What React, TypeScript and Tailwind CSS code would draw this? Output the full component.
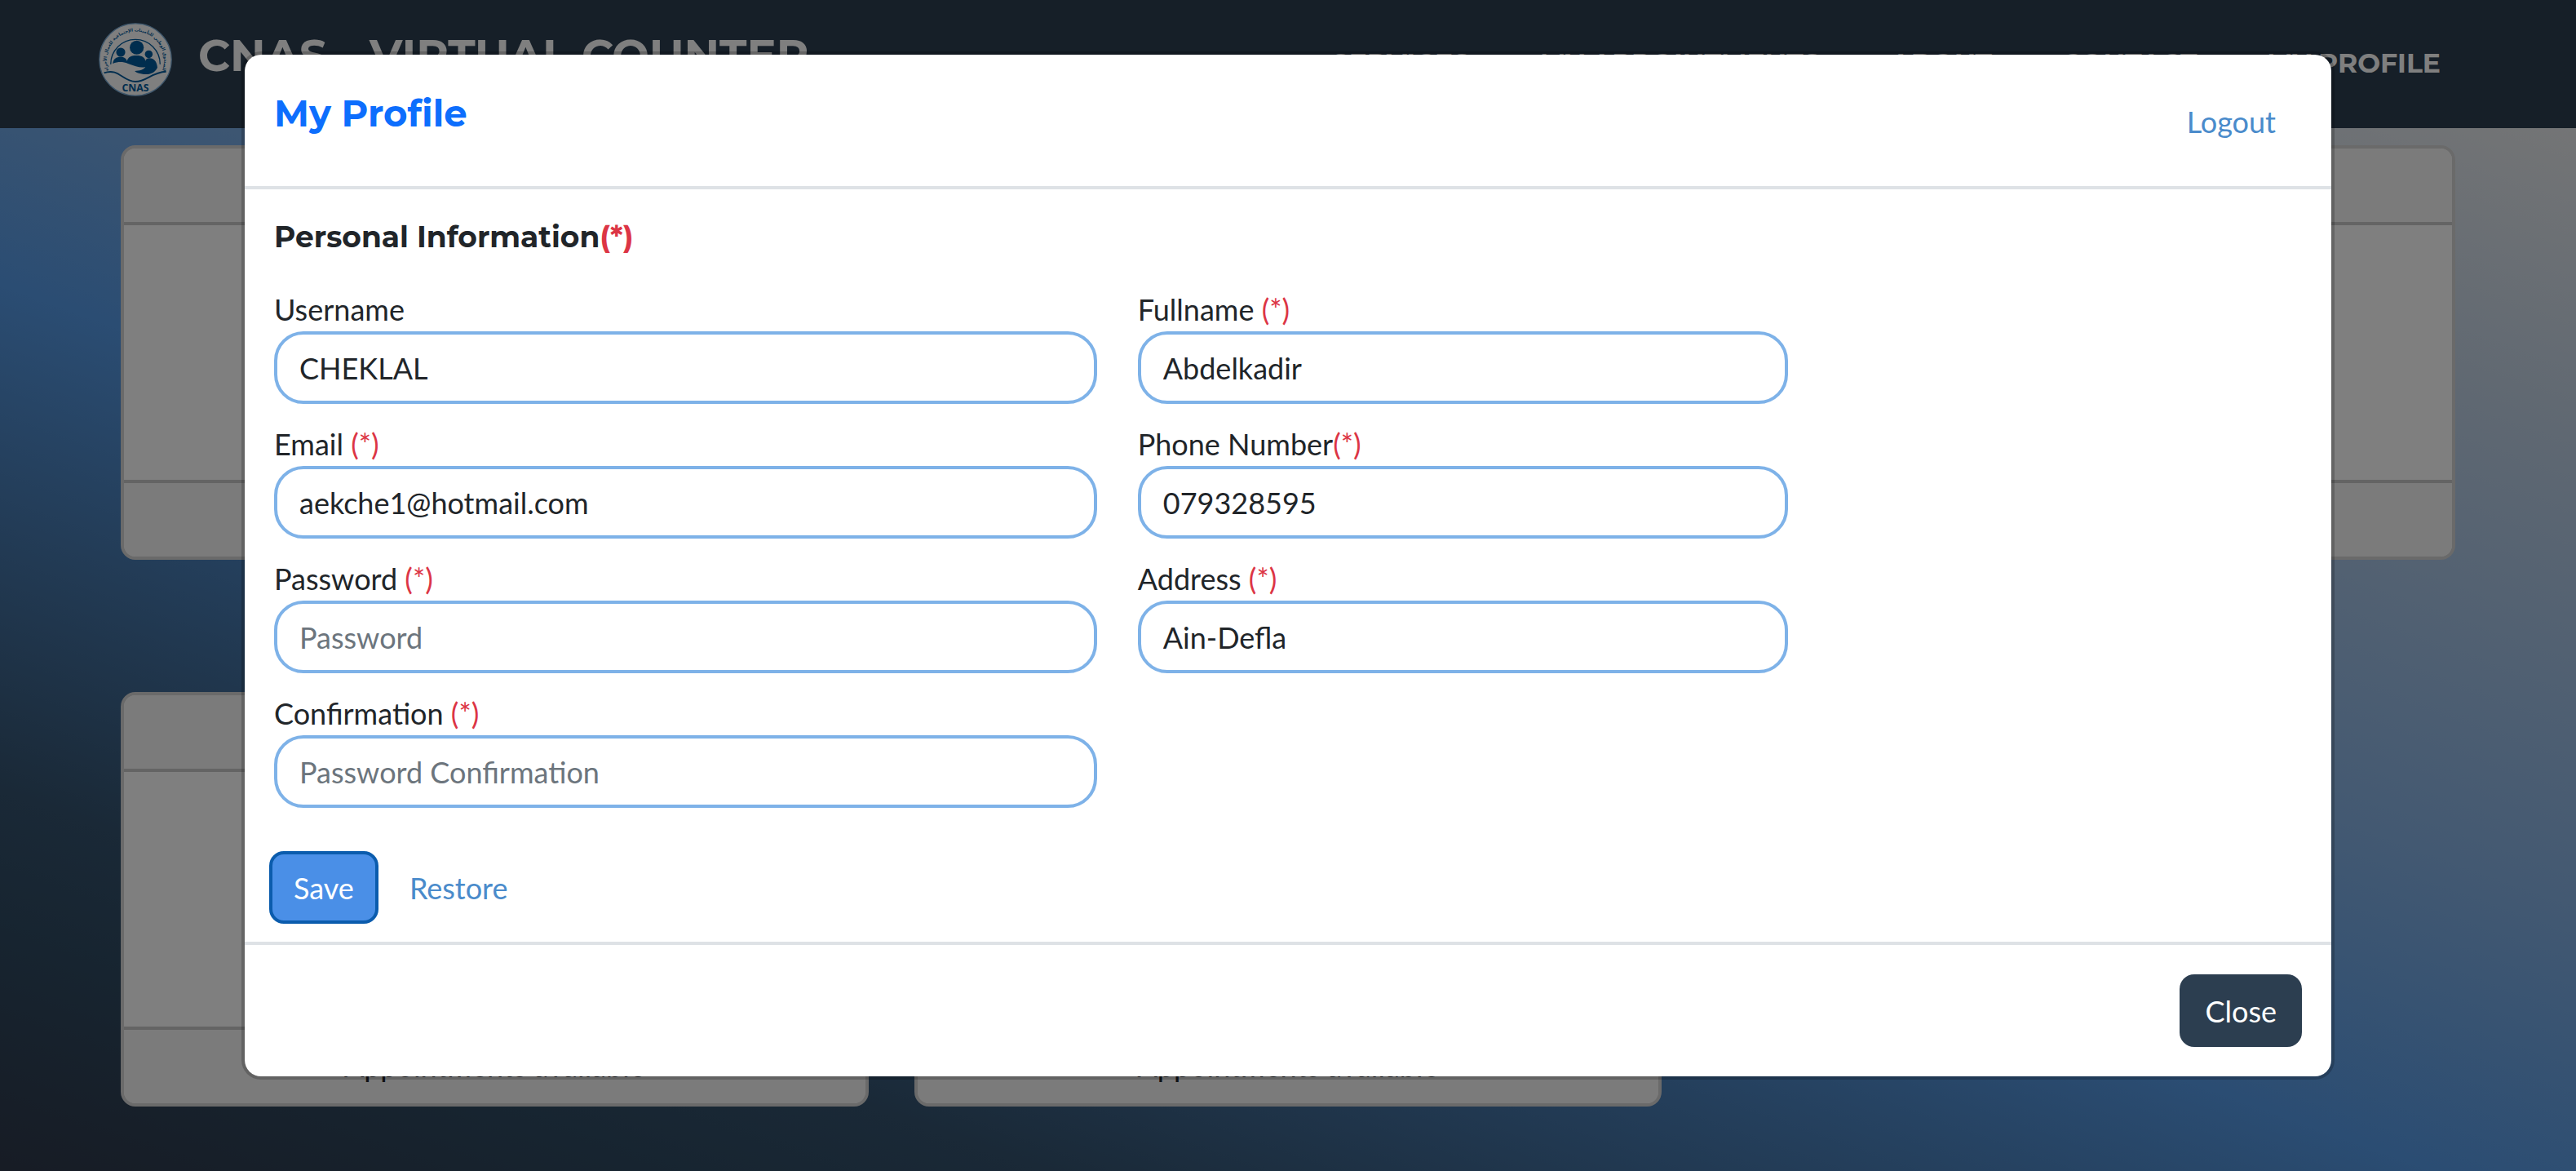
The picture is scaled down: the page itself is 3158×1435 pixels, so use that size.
import React from "react";

const navItems = ["SERVICES", "MY APPOINTMENTS", "ABOUT", "CONTACT", "MY PROFILE"];

function Logo() {
  return (
    <svg viewBox="0 0 110 110" className="size-[90px] shrink-0" role="img" aria-label="CNAS logo">
      <defs>
        <path id="ring" d="M17 76 A 43 43 0 1 1 93 76" />
      </defs>
      <circle cx="55" cy="55" r="54" fill="#fff" stroke="#7fb0da" strokeWidth="1.5" />
      <path d="M18 62a37 37 0 1 1 74 0" fill="none" stroke="#005a9c" strokeWidth="1.6" />
      <text fontSize="6.5" fontWeight="700" fill="#005a9c" direction="rtl" fontFamily="'DejaVu Sans', sans-serif">
        <textPath href="#ring" startOffset="50%" textAnchor="middle">
          الصندوق الوطني للتأمينات الإجتماعية للعمال الأجراء
        </textPath>
      </text>
      <g fill="#005a9c">
        <circle cx="57" cy="37" r="10.5" />
        <circle cx="33" cy="44" r="6.8" />
        <circle cx="75" cy="47" r="5.8" />
        <path d="M21 61c1-7 5-10 12-10 5 0 8 2 9.5 6 2-6 6-8 14.5-8 8 0 12 3 13 8 1-3 3-4 6-4 7 0 11 5 12 14-4 9-13 12-25 9-4-1-8-2-9-4 8 0 13-2 16-6-7 2-15-1-26-5-8-3-15-3-23 0z" />
      </g>
      <path d="M8 75c22-8 28 13 47 13 17 0 24-14 46-15" fill="none" stroke="#005a9c" strokeWidth="2.4" />
      <text x="55" y="103" fontSize="15" fontWeight="700" textAnchor="middle" fill="#005a9c" fontFamily="'Open Sans', sans-serif">
        CNAS
      </text>
    </svg>
  );
}

function Card({ footer }: { footer?: string }) {
  return (
    <article className="flex h-[508px] flex-col overflow-hidden rounded-[18px] border-4 border-[#d4d4d4] bg-white text-[36px] leading-[56px] text-[#212529]">
      <div className="h-[94px] shrink-0 border-b-4 border-[#c9c9c9] bg-[#f7f7f7]" />
      <div className="flex-1" />
      <div className="h-[94px] shrink-0 border-t-4 border-[#c9c9c9] bg-[#f7f7f7] py-4 text-center">{footer}</div>
    </article>
  );
}

type FieldProps = {
  id: string;
  label: string;
  required?: boolean;
  type?: string;
  value?: string;
  placeholder?: string;
  column: string;
};

function Field({ id, label, required, type = "text", value, placeholder, column }: FieldProps) {
  return (
    <div className={column}>
      <label htmlFor={id} className="block h-14 leading-[58px] whitespace-pre">
        {label}
        {required && <span className="text-[#dc3545]">(*)</span>}
      </label>
      <input
        id={id}
        type={type}
        defaultValue={value}
        placeholder={placeholder}
        className="block h-[89px] w-full rounded-[36px] border-4 border-[#7eb2e8] bg-white px-[27px] outline-none placeholder:text-[#6c757d]"
      />
    </div>
  );
}

function ProfileDialog() {
  return (
    <section
      role="dialog"
      aria-labelledby="profile-title"
      className="w-full rounded-[24px] border-4 border-black/20 bg-white bg-clip-padding"
    >
      <header className="flex h-[165px] items-start justify-between border-b-4 border-[#dee2e6] px-9 pt-[38px]">
        <h2 id="profile-title" className="font-['Montserrat','Inter',sans-serif] text-[45px] leading-[68px] font-bold text-[#0d6efd]">
          My Profile
        </h2>
        <a href="#logout" className="px-8 py-4 text-[#4a8bcb]">
          Logout
        </a>
      </header>
      <form className="pr-[31px] pl-9">
        <h3 className="pt-8 pb-[34px] font-['Montserrat','Inter',sans-serif] text-[36px] leading-[52px] font-bold">
          Personal Information<span className="text-[#dc3545]">(*)</span>
        </h3>
        <div className="grid grid-cols-12 gap-x-[50px] gap-y-5">
          <Field id="username" label="Username" value="CHEKLAL" column="col-span-5" />
          <Field id="fullname" label="Fullname " required value="Abdelkadir" column="col-span-4" />
          <Field id="email" label="Email " required type="email" value="aekche1@hotmail.com" column="col-span-5 col-start-1" />
          <Field id="phone" label="Phone Number" required type="tel" value="079328595" column="col-span-4" />
          <Field id="password" label="Password " required type="password" placeholder="Password" column="col-span-5 col-start-1" />
          <Field id="address" label="Address " required value="Ain-Defla" column="col-span-4" />
          <Field id="confirm" label="Confirmation " required type="password" placeholder="Password Confirmation" column="col-span-5 col-start-1" />
        </div>
        <div className="-ml-1.5 flex gap-1.5 pt-[53px] pb-[22px]">
          <button type="submit" className="h-[89px] rounded-[18px] border-4 border-[#0b5cad] bg-[#4a8fe7] px-[26px] text-white">
            Save
          </button>
          <button type="reset" className="h-[89px] px-8 text-[#4a8bcb]">
            Restore
          </button>
        </div>
      </form>
      <footer className="flex justify-end border-t-4 border-[#dee2e6] p-9">
        <button type="button" className="h-[89px] rounded-[18px] bg-[#2c3e50] px-[31px] text-white">
          Close
        </button>
      </footer>
    </section>
  );
}

export default function App() {
  return (
    <div className="relative min-h-screen overflow-hidden bg-[linear-gradient(20deg,#2e384a_0%,#2f4a62_12%,#34526e_18%,#569ae6_42%,#86b2e4_57%,#bed0e4_79%,#e8eaec_94%)] font-['Lato',sans-serif] text-[36px] leading-[56px] text-[#212529]">
      <nav className="flex h-[157px] items-start bg-[#2c3e50] pr-[166px] pl-[121px] font-['Montserrat','Inter',sans-serif] font-bold text-white">
        <div className="flex items-start gap-8 pt-7">
          <Logo />
          <span className="text-[54px] leading-[80px]">CNAS - VIRTUAL COUNTER</span>
        </div>
        <ul className="ml-auto flex gap-[86px] pt-[49px] text-[33px]">
          {navItems.map((item) => (
            <li key={item}>
              <a href="#menu">{item}</a>
            </li>
          ))}
        </ul>
      </nav>
      <main className="grid grid-cols-3 gap-x-[56px] gap-y-[162px] px-[148px] pt-[21px]">
        <Card />
        <Card />
        <Card />
        <Card footer="Appointments available" />
        <Card footer="Appointments available" />
      </main>
      <div className="absolute inset-0 flex items-start bg-black/50 px-[296px] pt-[63px]">
        <ProfileDialog />
      </div>
    </div>
  );
}
